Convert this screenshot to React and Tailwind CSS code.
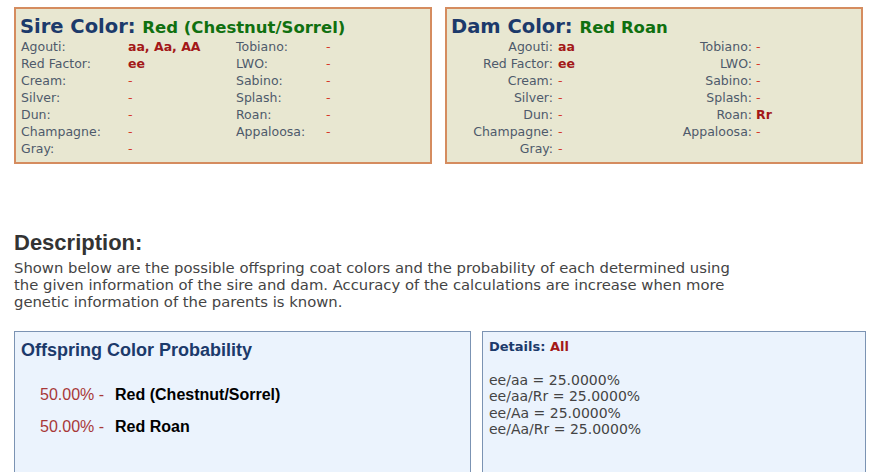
import React from 'react';

const verdana = { fontFamily: '"DejaVu Sans", Verdana, sans-serif' };

const sireRows = [
  ['Agouti:', 'aa, Aa, AA', 'Tobiano:', '-'],
  ['Red Factor:', 'ee', 'LWO:', '-'],
  ['Cream:', '-', 'Sabino:', '-'],
  ['Silver:', '-', 'Splash:', '-'],
  ['Dun:', '-', 'Roan:', '-'],
  ['Champagne:', '-', 'Appaloosa:', '-'],
  ['Gray:', '-', null, null],
];

const damRows = [
  ['Agouti:', 'aa', 'Tobiano:', '-'],
  ['Red Factor:', 'ee', 'LWO:', '-'],
  ['Cream:', '-', 'Sabino:', '-'],
  ['Silver:', '-', 'Splash:', '-'],
  ['Dun:', '-', 'Roan:', 'Rr'],
  ['Champagne:', '-', 'Appaloosa:', '-'],
  ['Gray:', '-', null, null],
];

const Value = ({ v }) =>
  v === '-' ? (
    <span className="text-[#d6392c]">-</span>
  ) : (
    <span className="font-bold text-[#a31818]">{v}</span>
  );

function ParentBox({ title, color, rows, right }) {
  const cols = right
    ? 'grid-cols-[106px_100px_99px_1fr]'
    : 'grid-cols-[106px_109px_90px_1fr]';
  const labelCls = right ? 'text-right pr-[4px]' : '';
  return (
    <div className="bg-[#e8e7d1] border-2 border-[#d58c5f] pt-[6px] pb-[5px] pl-[4px]" style={verdana}>
      <div className="h-[23px] leading-[24px] whitespace-nowrap">
        <span className="text-[19.5px] font-bold text-[#1c3a6b]">{title} </span>
        <span className="text-[16.5px] font-bold text-[#107010]">{color}</span>
      </div>
      <div className={`grid ${cols} text-[12.5px] leading-[17px] text-[#4e5a6b] ${right ? '' : 'pl-[1px]'}`}>
        {rows.map((r, i) => (
          <React.Fragment key={i}>
            <div className={labelCls}>{r[0]}</div>
            <div className="pl-[1px]"><Value v={r[1]} /></div>
            <div className={labelCls}>{r[2]}</div>
            <div>{r[3] && <Value v={r[3]} />}</div>
          </React.Fragment>
        ))}
      </div>
    </div>
  );
}

export default function App() {
  return (
    <div className="w-[878px] h-[472px] overflow-hidden bg-white">
      <div className="grid grid-cols-[418px_418px] gap-[13px] pl-[14px] pt-[7px]">
        <ParentBox title="Sire Color:" color="Red (Chestnut/Sorrel)" rows={sireRows} />
        <ParentBox title="Dam Color:" color="Red Roan" rows={damRows} right />
      </div>

      <div className="pl-[14px] mt-[66px]">
        <h2
          className="text-[22px] leading-[26px] font-bold text-[#333333]"
          style={{ fontFamily: '"Liberation Sans", Arial, sans-serif' }}
        >
          Description:
        </h2>
        <p className="mt-[3px] text-[14.8px] leading-[17px] text-[#444444] whitespace-nowrap" style={verdana}>
          Shown below are the possible offspring coat colors and the probability of each determined using
          <br />
          the given information of the sire and dam. Accuracy of the calculations are increase when more
          <br />
          genetic information of the parents is known.
        </p>
      </div>

      <div className="flex gap-[11px] pl-[14px] mt-[21px]">
        <div
          className="w-[457px] h-[160px] bg-[#ebf3fd] border border-[#7b93b3] pt-[7px] pl-[6px]"
          style={{ fontFamily: '"Liberation Sans", Arial, sans-serif' }}
        >
          <div className="text-[18px] leading-[22px] font-bold text-[#1c3a6b]">Offspring Color Probability</div>
          <div className="mt-[24px] pl-[19px] flex flex-col gap-[12px] text-[16px] leading-[20px]">
            <div>
              <span className="text-[#a83838]">50.00% -</span>
              <span className="ml-[11px] font-bold text-black">Red (Chestnut/Sorrel)</span>
            </div>
            <div>
              <span className="text-[#a83838]">50.00% -</span>
              <span className="ml-[11px] font-bold text-black">Red Roan</span>
            </div>
          </div>
        </div>

        <div
          className="w-[384px] h-[160px] bg-[#ebf3fd] border border-[#7b93b3] pt-[7px] pl-[6px]"
          style={verdana}
        >
          <div className="text-[13px] leading-[16px] font-bold">
            <span className="text-[#1c3a6b]">Details: </span>
            <span className="text-[#a31818]">All</span>
          </div>
          <div className="mt-[17px] text-[14px] leading-[16.3px] text-[#444444]">
            <div>ee/aa = 25.0000%</div>
            <div>ee/aa/Rr = 25.0000%</div>
            <div>ee/Aa = 25.0000%</div>
            <div>ee/Aa/Rr = 25.0000%</div>
          </div>
        </div>
      </div>
    </div>
  );
}
